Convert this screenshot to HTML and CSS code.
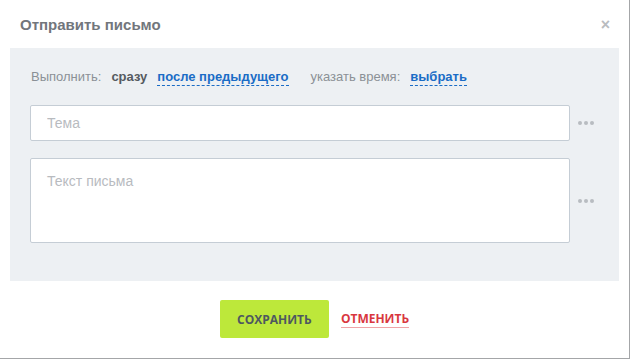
FILE: index.html
```html
<!DOCTYPE html>
<html lang="ru">
<head>
    <meta charset="UTF-8">
    <meta name="viewport" content="width=device-width, initial-scale=1.0">
    <title>Отправить письмо</title>
    <link rel="stylesheet" href="styles.css">
</head>
<body>
    <div class="dialog">
        <div class="dialog-header">
            <h2 class="dialog-title">Отправить письмо</h2>
            <span class="close">&times;</span>
        </div>

        <div class="panel">
            <div class="run-row">
                <span class="muted">Выполнить:</span>
                <span class="current">сразу</span>
                <a class="dashed" href="#">после предыдущего</a>
                <span class="muted time-label">указать время:</span>
                <a class="dashed" href="#">выбрать</a>
            </div>

            <div class="field-row">
                <input class="field" type="text" placeholder="Тема">
                <div class="more"><span></span><span></span><span></span></div>
            </div>

            <div class="field-row body-row">
                <textarea class="field area" placeholder="Текст письма"></textarea>
                <div class="more"><span></span><span></span><span></span></div>
            </div>
        </div>

        <div class="dialog-footer">
            <button class="btn-save" type="button">Сохранить</button>
            <a class="btn-cancel" href="#">Отменить</a>
        </div>
    </div>
</body>
</html>
```

FILE: styles.css
```css
:root {
    --panel: #edf0f3;
    --muted: #8b9096;
    --text: #555a60;
    --link: #1a6cc6;
    --border: #c5cdd5;
    --green: #bde83a;
    --red: #d9373f;
}

body {
    margin: 0;
    background: #ffffff;
    font-family: "Liberation Sans", Arial, sans-serif;
}

.dialog {
    width: 630px;
    height: 359px;
    box-sizing: border-box;
    background: #ffffff;
    border-right: 1px solid #a4a6a8;
    border-bottom: 1px solid #a4a6a8;
}

.dialog-header {
    height: 48px;
    padding: 0 20px;
    display: flex;
    align-items: center;
    justify-content: space-between;
}

.dialog-title {
    margin: 0;
    font-size: 15px;
    font-weight: bold;
    color: #72767c;
}

.close {
    font-size: 16px;
    font-weight: bold;
    color: #b9bcc0;
    margin-top: 2px;
    margin-right: -1px;
    line-height: 1;
}

.panel {
    margin: 0 10px;
    height: 233px;
    box-sizing: border-box;
    background: var(--panel);
    padding: 20px 20px 0;
}

.run-row {
    display: flex;
    align-items: baseline;
    height: 18px;
    padding-left: 1px;
    font-size: 13px;
    line-height: 18px;
}

.muted {
    color: var(--muted);
}

.current {
    margin-left: 10px;
    font-weight: bold;
    color: var(--text);
}

.dashed {
    margin-left: 10px;
    font-weight: bold;
    color: var(--link);
    text-decoration: none;
    line-height: 16px;
    border-bottom: 1px dashed var(--link);
}

.time-label {
    margin-left: 22px;
}

.field-row {
    display: flex;
    align-items: center;
    margin-top: 19px;
}

.body-row {
    margin-top: 17px;
}

.field {
    width: 540px;
    height: 36px;
    box-sizing: border-box;
    margin: 0;
    padding: 0 16px;
    border: 1px solid var(--border);
    border-radius: 2px;
    background: #ffffff;
    font-family: "Liberation Sans", Arial, sans-serif;
    font-size: 14px;
    color: var(--text);
    outline: none;
}

.field::placeholder {
    color: #b8bbbf;
}

.area {
    height: 85px;
    padding: 14px 16px;
    resize: none;
    display: block;
}

.more {
    display: flex;
    gap: 2px;
    margin-left: 8px;
}

.more span {
    width: 4px;
    height: 4px;
    border-radius: 50%;
    background: #b8bcc1;
}

.dialog-footer {
    height: 76px;
    display: flex;
    align-items: center;
    justify-content: center;
    gap: 12px;
}

.btn-save {
    width: 109px;
    height: 38px;
    border: none;
    border-radius: 2px;
    background: var(--green);
    color: #4e5860;
    font-family: "Open Sans", sans-serif;
    font-size: 12px;
    font-weight: bold;
    text-transform: uppercase;
    cursor: pointer;
}

.btn-cancel {
    color: var(--red);
    font-family: "Open Sans", sans-serif;
    font-size: 12px;
    font-weight: bold;
    text-transform: uppercase;
    text-decoration: none;
    line-height: 16px;
    border-bottom: 1px solid #f0a3a6;
}
```
